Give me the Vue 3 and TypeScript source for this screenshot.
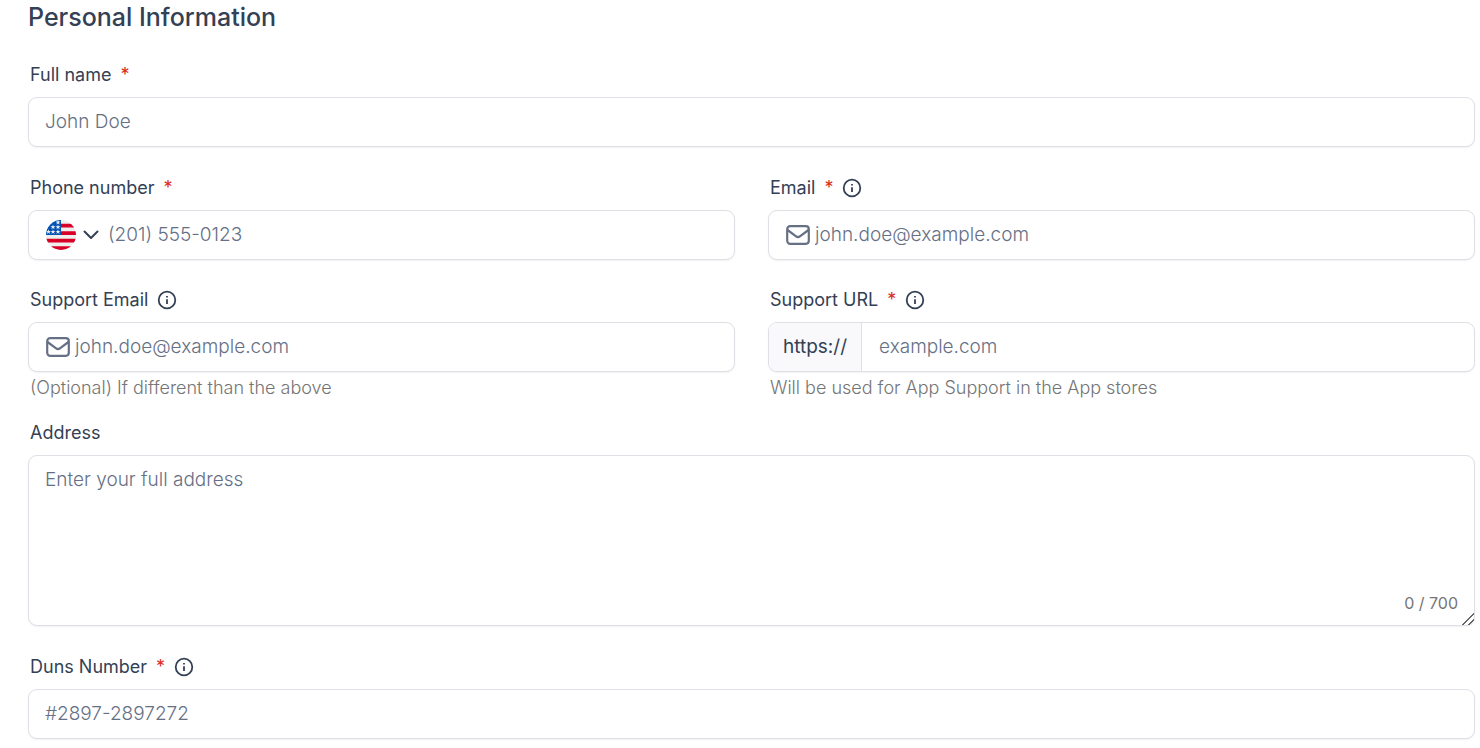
<script setup lang="ts">
import { computed, ref } from 'vue'

const fullName = ref('')
const phone = ref('')
const email = ref('')
const supportEmail = ref('')
const supportUrl = ref('')
const address = ref('')
const duns = ref('')

const addressLimit = 700
const addressCount = computed(() => `${address.value.length} / ${addressLimit}`)
</script>

<template>
  <form class="form" @submit.prevent>
    <h2 class="title">Personal Information</h2>

    <div class="field">
      <div class="label-row">
        <label for="full-name">Full name</label>
        <span class="required">*</span>
      </div>
      <input id="full-name" v-model="fullName" class="box" type="text" placeholder="John Doe" required />
    </div>

    <div class="pairs">
      <div class="field">
        <div class="label-row">
          <label for="phone">Phone number</label>
          <span class="required">*</span>
        </div>
        <div class="box group">
          <button class="country" type="button" aria-label="Select country">
            <svg class="flag" viewBox="0 0 30 30" aria-hidden="true">
              <defs>
                <clipPath id="flag-disc"><circle cx="15" cy="15" r="15" /></clipPath>
              </defs>
              <g clip-path="url(#flag-disc)">
                <rect width="30" height="30" fill="#eeeeee" />
                <path fill="#d80027" d="M15 3.750h15V7.500H15zM15 11.250h15V15H15zM0 18.750h30v3.750H0zM0 26.250h30V30H0z" />
                <path fill="#0052b4" d="M0 0h15v15H0z" />
                <path
                  fill="#eeeeee"
                  d="M12 -.2l.6 1.800h1.900l-1.500 1.100.6 1.800-1.600-1.100-1.600 1.100.6-1.800-1.500-1.100h1.900zM7 4.500l.6 1.800h1.900l-1.500 1.100.6 1.800-1.600-1.100-1.600 1.100.6-1.800-1.500-1.100h1.900zM12 4.500l.6 1.800h1.900l-1.500 1.100.6 1.800-1.600-1.100-1.600 1.100.6-1.800-1.500-1.100h1.900zM2.500 9.200l.6 1.800h1.900l-1.500 1.100.6 1.800-1.600-1.100-1.600 1.100.6-1.800L0 11h1.900zM7 9.200l.6 1.800h1.900l-1.500 1.100.6 1.800L7 12.800l-1.600 1.100.6-1.800L4.500 11h1.900zM12 9.200l.6 1.800h1.900l-1.500 1.100.6 1.800-1.600-1.100-1.600 1.100.6-1.800L9.500 11h1.900z"
                />
              </g>
            </svg>
            <svg class="chevron" viewBox="0 0 16 10" aria-hidden="true">
              <path d="M1.500 1.500L8 8l6.500-6.500" />
            </svg>
          </button>
          <input id="phone" v-model="phone" type="tel" placeholder="(201) 555-0123" required />
        </div>
      </div>

      <div class="field">
        <div class="label-row">
          <label for="email">Email</label>
          <span class="required">*</span>
          <svg class="info" viewBox="0 0 20 20" aria-hidden="true">
            <circle cx="10" cy="10" r="8.300" />
            <path d="M10 9.200V14M10 6v1.600" />
          </svg>
        </div>
        <div class="box group">
          <svg class="mail" viewBox="0 0 24 20" aria-hidden="true">
            <rect x="1.200" y="1.200" width="21.600" height="17.600" rx="3" />
            <path d="M1.500 5l8.600 6.300a3.200 3.200 0 0 0 3.800 0L22.500 5" />
          </svg>
          <input id="email" v-model="email" type="email" placeholder="john.doe@example.com" required />
        </div>
      </div>

      <div class="field">
        <div class="label-row">
          <label for="support-email">Support Email</label>
          <svg class="info" viewBox="0 0 20 20" aria-hidden="true">
            <circle cx="10" cy="10" r="8.300" />
            <path d="M10 9.200V14M10 6v1.600" />
          </svg>
        </div>
        <div class="box group">
          <svg class="mail" viewBox="0 0 24 20" aria-hidden="true">
            <rect x="1.200" y="1.200" width="21.600" height="17.600" rx="3" />
            <path d="M1.500 5l8.600 6.300a3.200 3.200 0 0 0 3.800 0L22.500 5" />
          </svg>
          <input
            id="support-email"
            v-model="supportEmail"
            type="email"
            placeholder="john.doe@example.com"
            aria-describedby="support-email-help"
          />
        </div>
        <p id="support-email-help" class="help">(Optional) If different than the above</p>
      </div>

      <div class="field">
        <div class="label-row">
          <label for="support-url">Support URL</label>
          <span class="required">*</span>
          <svg class="info" viewBox="0 0 20 20" aria-hidden="true">
            <circle cx="10" cy="10" r="8.300" />
            <path d="M10 9.200V14M10 6v1.600" />
          </svg>
        </div>
        <div class="box group prefixed">
          <span class="prefix">https://</span>
          <input
            id="support-url"
            v-model="supportUrl"
            type="text"
            placeholder="example.com"
            aria-describedby="support-url-help"
            required
          />
        </div>
        <p id="support-url-help" class="help">Will be used for App Support in the App stores</p>
      </div>
    </div>

    <div class="field after-help">
      <div class="label-row">
        <label for="address">Address</label>
      </div>
      <div class="area">
        <textarea
          id="address"
          v-model="address"
          class="box"
          :maxlength="addressLimit"
          placeholder="Enter your full address"
        ></textarea>
        <span class="count">{{ addressCount }}</span>
      </div>
    </div>

    <div class="field">
      <div class="label-row">
        <label for="duns">Duns Number</label>
        <span class="required">*</span>
        <svg class="info" viewBox="0 0 20 20" aria-hidden="true">
          <circle cx="10" cy="10" r="8.300" />
          <path d="M10 9.200V14M10 6v1.600" />
        </svg>
      </div>
      <input id="duns" v-model="duns" class="box" type="text" placeholder="#2897-2897272" required />
    </div>
  </form>
</template>

<style>
body {
  margin: 0;
  background: #ffffff;
}
</style>

<style scoped>
.form {
  box-sizing: border-box;
  padding: 0 5px 9px 28px;
  color: #344054;
  font-family: Inter, "Liberation Sans", sans-serif;
}

.title {
  margin: 0;
  font-size: 25px;
  font-weight: 480;
  line-height: 34px;
}

.field,
.pairs {
  margin-top: 29px;
}

.pairs {
  display: grid;
  grid-template-columns: 1fr 1fr;
  gap: 28px 33px;
}

.pairs .field {
  margin-top: 0;
}

.after-help {
  margin-top: 21px;
}

.label-row {
  display: flex;
  align-items: center;
  gap: 9px;
  height: 24px;
  margin-bottom: 10px;
  padding-left: 2px;
  font-size: 18px;
  font-weight: 420;
  line-height: 24px;
}

.required {
  color: #d92d20;
}

.info {
  width: 20px;
  height: 20px;
  fill: none;
  stroke: #344054;
  stroke-width: 1.8;
}

.box {
  display: block;
  box-sizing: border-box;
  width: 100%;
  height: 50px;
  border: 1px solid #dfdfe6;
  border-radius: 9px;
  background: #ffffff;
  box-shadow: 0 1px 2px rgba(16, 24, 40, 0.06);
}

input,
textarea {
  padding: 0 16px 2px;
  color: #344054;
  font-family: inherit;
  font-size: 19px;
  font-weight: 360;
  outline: none;
}

input::placeholder,
textarea::placeholder {
  color: #667085;
  opacity: 1;
}

.group {
  display: flex;
  align-items: center;
  padding-left: 17px;
}

.group input {
  flex: 1;
  min-width: 0;
  height: 100%;
  padding-left: 0;
  border: 0;
  background: transparent;
}

.country {
  display: flex;
  align-items: center;
  gap: 7px;
  margin-right: 9px;
  padding: 0;
  border: 0;
  background: transparent;
}

.flag {
  width: 30px;
  height: 30px;
}

.chevron {
  width: 16px;
  height: 10px;
  fill: none;
  stroke: #344054;
  stroke-width: 2;
  stroke-linecap: round;
  stroke-linejoin: round;
}

.mail {
  flex: none;
  width: 24px;
  height: 20px;
  margin-right: 5px;
  fill: none;
  stroke: #667085;
  stroke-width: 2.2;
}

.prefixed {
  padding-left: 0;
  overflow: hidden;
}

.prefix {
  box-sizing: border-box;
  height: 100%;
  padding: 0 14px;
  border-right: 1px solid #dfdfe6;
  background: #f9f9fc;
  font-size: 19px;
  line-height: 47px;
}

.prefixed input {
  padding-left: 17px;
}

.help {
  margin: 4px 0 0;
  padding-left: 2px;
  color: #757575;
  font-size: 18px;
  font-weight: 350;
  line-height: 24px;
}

.area {
  position: relative;
}

textarea.box {
  height: 171px;
  padding: 11px 16px;
  line-height: 26px;
  resize: vertical;
}

textarea::-webkit-resizer {
  background: linear-gradient(
    135deg,
    transparent 0 58%,
    #666666 58% 65%,
    transparent 65% 77%,
    #666666 77% 84%,
    transparent 84%
  );
}

.count {
  position: absolute;
  right: 17px;
  bottom: 12px;
  color: #757575;
  font-size: 16px;
  line-height: 22px;
}
</style>
